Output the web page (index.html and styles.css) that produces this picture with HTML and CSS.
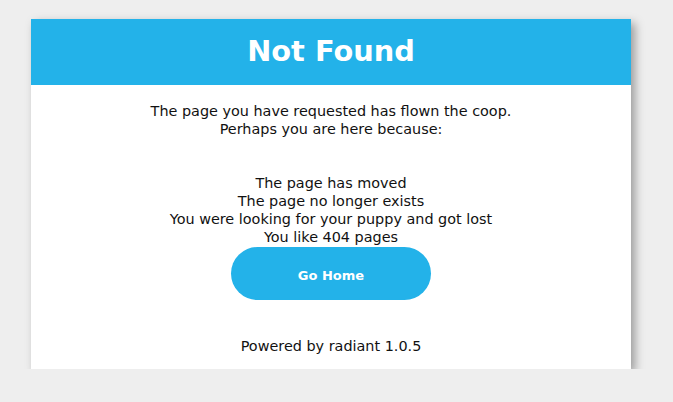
FILE: index.html
```html
<!DOCTYPE html>
<html>
<head>
<meta charset="utf-8">
<link rel="stylesheet" href="styles.css">
</head>
<body>
<div class="card">
  <div class="header"><h1>Not Found</h1></div>
  <div class="content">
    <p class="intro">The page you have requested has flown the coop.<br>Perhaps you are here because:</p>
    <ul class="reasons">
      <li>The page has moved</li>
      <li>The page no longer exists</li>
      <li>You were looking for your puppy and got lost</li>
      <li>You like 404 pages</li>
    </ul>
    <a class="btn" href="#">Go Home</a>
    <p class="footer">Powered by radiant 1.0.5</p>
  </div>
</div>
</body>
</html>
```
FILE: styles.css
```css
html, body {
  margin: 0;
  background: #eeeeee;
}
body {
  padding: 19px 0 0 31px;
  font-family: "DejaVu Sans", sans-serif;
  font-size: 14.4px;
  line-height: 17.7px;
  color: #111;
}
.card {
  width: 600px;
  background: #fff;
  box-shadow: 4px 4px 9px rgba(0,0,0,0.35);
}
.header {
  background: #23b2e9;
  height: 66px;
  display: flex;
  align-items: center;
  justify-content: center;
}
.header h1 {
  margin: 0 0 2px;
  color: #fff;
  font-size: 28.8px;
  font-weight: bold;
  line-height: 1;
}
.content {
  display: flex;
  flex-direction: column;
  align-items: center;
  padding: 18px 0 13px;
  text-align: center;
}
.intro {
  margin: 0;
}
.reasons {
  list-style: none;
  margin: 37px 0 0;
  padding: 0;
}
.btn {
  display: flex;
  align-items: center;
  justify-content: center;
  box-sizing: border-box;
  width: 200px;
  height: 53px;
  padding-top: 4px;
  border-radius: 27px;
  background: #23b2e9;
  color: #fff;
  font-weight: bold;
  font-size: 13px;
  text-decoration: none;
  margin-top: 1px;
}
.footer {
  margin: 38px 0 0;
}
```
